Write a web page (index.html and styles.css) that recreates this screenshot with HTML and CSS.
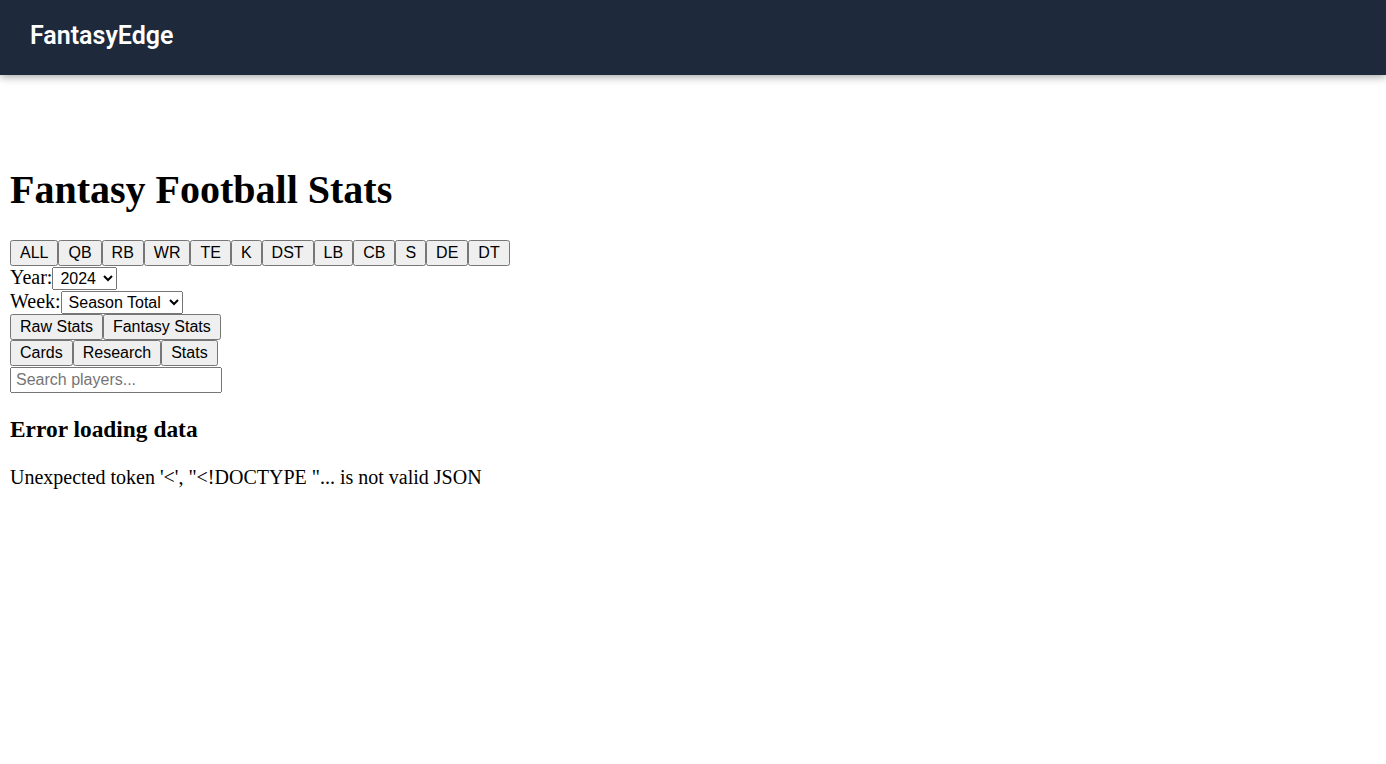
FILE: index.html
```html
<!DOCTYPE html>
<html lang="en">
<head>
<meta charset="utf-8">
<title>FantasyEdge</title>
<link rel="stylesheet" href="styles.css">
</head>
<body>
<header class="topbar">
  <div class="brand">FantasyEdge</div>
</header>
<main class="page">
  <h1 class="title">Fantasy Football Stats</h1>
  <div class="btn-row"><button>ALL</button><button>QB</button><button>RB</button><button>WR</button><button>TE</button><button>K</button><button>DST</button><button>LB</button><button>CB</button><button>S</button><button>DE</button><button>DT</button></div>
  <div class="field-row"><label>Year:</label><select><option>2024</option></select></div>
  <div class="field-row"><label>Week:</label><select><option>Season Total</option></select></div>
  <div class="btn-row"><button>Raw Stats</button><button>Fantasy Stats</button></div>
  <div class="btn-row"><button>Cards</button><button>Research</button><button>Stats</button></div>
  <div class="btn-row"><input class="search" type="text" placeholder="Search players..."></div>
  <h3 class="err-title">Error loading data</h3>
  <p class="err-msg">Unexpected token '&lt;', "&lt;!DOCTYPE "... is not valid JSON</p>
</main>
</body>
</html>
```
FILE: styles.css
```css
html, body {
  margin: 0;
  padding: 0;
  background: #ffffff;
}
body {
  font-family: "Liberation Serif", "Times New Roman", serif;
  font-size: 20px;
  color: #000;
}
.topbar {
  height: 75px;
  box-sizing: border-box;
  background: #1e293b;
  display: flex;
  align-items: center;
  padding: 0 30px 4px;
  box-shadow: 0 2px 8px rgba(0, 0, 0, 0.35);
}
.brand {
  font-family: Roboto, "Liberation Sans", sans-serif;
  font-weight: 600;
  font-size: 25px;
  color: #ffffff;
}
.page {
  padding: 64px 10px 10px;
}
.title {
  font-size: 40px;
  font-weight: bold;
  margin: 26.8px 0;
}
.btn-row {
  display: flex;
}
.field-row {
  display: flex;
  align-items: baseline;
  height: 24px;
}
button, select, input {
  font-family: "Liberation Sans", Arial, sans-serif;
  font-size: 16px;
}
button {
  padding: 2px 8px;
}
select {
  padding: 1px 4px 1px 3px;
  height: 23px;
}
.search {
  width: 200px;
  padding: 2px 4px;
  margin-top: 1px;
}
.err-title {
  font-size: 23.4px;
  margin: 23.4px 0;
}
.err-msg {
  margin: 20px 0;
}
```
